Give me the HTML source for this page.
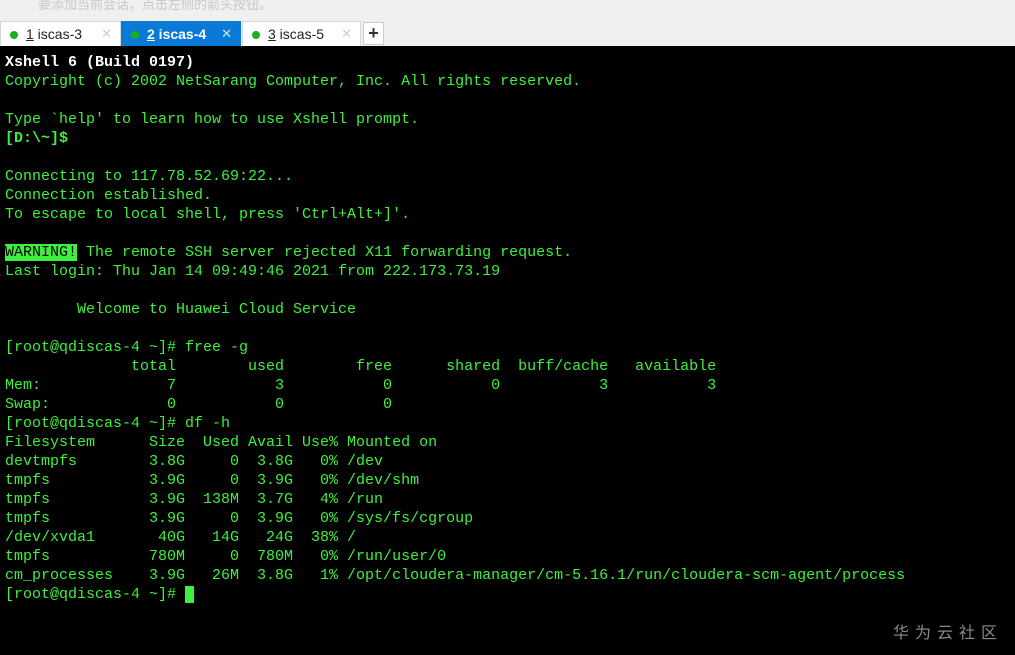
<!DOCTYPE html>
<html><head><meta charset="utf-8"><style>
body{margin:0;width:1015px;height:655px;overflow:hidden;background:#000;font-family:"Liberation Sans","Noto Sans CJK SC",sans-serif;}
.top{position:absolute;left:0;top:0;width:1015px;height:20px;background:#f0f0f0;color:#c8c8c8;font-size:13px;}
.top span{position:absolute;left:38px;top:-6px;}
.tabs{position:absolute;left:0;top:20px;width:1015px;height:26px;background:#f0f0f0;}
.tab{position:absolute;top:1px;height:25px;background:#fff;border:1px solid #d8d8d8;border-bottom:none;box-sizing:border-box;font-size:14px;color:#222;line-height:24px;}
.tab .d{position:absolute;left:9px;top:9px;width:8px;height:8px;border-radius:50%;background:#1ab01a;}
.tab .t{position:absolute;left:25px;}
.tab .x{position:absolute;right:8px;top:0;color:#ccc;font-size:13px;}
.tab.a{background:#0a7ad6;border-color:#0a7ad6;color:#fff;font-weight:bold;}
.tab.a .x{color:#cfe3f7;font-weight:normal;}
.plus{position:absolute;left:363px;top:2px;width:21px;height:23px;background:#fff;border:1px solid #ccc;box-sizing:border-box;text-align:center;font-size:18px;line-height:21px;font-weight:bold;color:#333;}
pre{position:absolute;left:5px;top:53px;margin:0;font-family:"Liberation Mono",monospace;font-size:15px;line-height:19px;color:#3ef03e;}
b.w{color:#fff}
.warn{background:#3ef03e;color:#000}
.cur{background:#3ef03e;}
.wm{position:absolute;left:893px;top:619px;color:#8a8a8a;font-size:16px;letter-spacing:6px;}
</style></head><body>
<div class="top"><span>要添加当前会话，点击左侧的箭头按钮。</span></div>
<div class="tabs">
<div class="tab" style="left:0;width:121px"><span class="d"></span><span class="t"><u>1</u> iscas-3</span><span class="x">✕</span></div>
<div class="tab a" style="left:121px;width:120px"><span class="d"></span><span class="t"><u>2</u> iscas-4</span><span class="x">✕</span></div>
<div class="tab" style="left:242px;width:119px"><span class="d"></span><span class="t"><u>3</u> iscas-5</span><span class="x">✕</span></div>
<div class="plus">+</div>
</div>
<pre><b class="w">Xshell 6 (Build 0197)</b>
Copyright (c) 2002 NetSarang Computer, Inc. All rights reserved.

Type `help' to learn how to use Xshell prompt.
<b>[D:\~]$</b> 

Connecting to 117.78.52.69:22...
Connection established.
To escape to local shell, press 'Ctrl+Alt+]'.

<span class="warn">WARNING!</span> The remote SSH server rejected X11 forwarding request.
Last login: Thu Jan 14 09:49:46 2021 from 222.173.73.19

        Welcome to Huawei Cloud Service

[root@qdiscas-4 ~]# free -g
              total        used        free      shared  buff/cache   available
Mem:              7           3           0           0           3           3
Swap:             0           0           0
[root@qdiscas-4 ~]# df -h
Filesystem      Size  Used Avail Use% Mounted on
devtmpfs        3.8G     0  3.8G   0% /dev
tmpfs           3.9G     0  3.9G   0% /dev/shm
tmpfs           3.9G  138M  3.7G   4% /run
tmpfs           3.9G     0  3.9G   0% /sys/fs/cgroup
/dev/xvda1       40G   14G   24G  38% /
tmpfs           780M     0  780M   0% /run/user/0
cm_processes    3.9G   26M  3.8G   1% /opt/cloudera-manager/cm-5.16.1/run/cloudera-scm-agent/process
[root@qdiscas-4 ~]# <span class="cur"> </span></pre>
<div class="wm">华为云社区</div>
</body></html>
